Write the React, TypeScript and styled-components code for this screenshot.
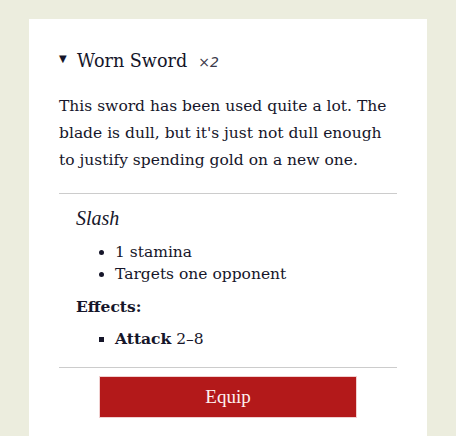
import React from "react";
import styled, { createGlobalStyle } from "styled-components";

const Global = createGlobalStyle`
  html, body {
    margin: 0;
    padding: 0;
    background: #ecedde;
  }
  body {
    font-family: "DejaVu Serif", "Liberation Serif", serif;
    color: #16162a;
  }
`;

const Page = styled.div`
  padding-top: 19px;
`;

const Card = styled.section`
  width: 398px;
  margin: 0 auto;
  background: #ffffff;
  box-sizing: border-box;
  padding: 30px 30px 19px;
`;

const Summary = styled.div`
  display: flex;
  align-items: baseline;
  height: 24px;
`;

const Marker = styled.span`
  align-self: center;
  width: 18px;
  margin-bottom: 5px;
  font-size: 10px;
  line-height: 1;
`;

const Title = styled.h2`
  margin: 0;
  font-size: 17.6px;
  font-weight: 400;
  line-height: 24px;
`;

const Count = styled.span`
  margin-left: 11px;
  font-family: "DejaVu Sans", sans-serif;
  font-style: italic;
  font-size: 14px;
  color: #3a3a4a;
`;

const Description = styled.p`
  margin: 20px 0 19px;
  font-size: 15.5px;
  line-height: 27px;
`;

const Divider = styled.hr`
  margin: 0;
  border: none;
  border-top: 1px solid #cccccc;
`;

const Ability = styled.div`
  padding: 11px 0 17px 17px;
`;

const AbilityName = styled.h3`
  margin: 0;
  font-family: "Liberation Serif", serif;
  font-style: italic;
  font-weight: 400;
  font-size: 20px;
  line-height: 26px;
`;

const List = styled.ul<{ $square?: boolean }>`
  margin: 10px 0 0;
  padding-left: 39px;
  list-style: ${(p) => (p.$square ? "square" : "disc")};
  font-size: 15.5px;
  line-height: 22px;
`;

const Label = styled.div`
  margin-top: 11px;
  font-size: 15.5px;
  font-weight: 700;
  line-height: 22px;
`;

const Strong = styled.b`
  font-weight: 700;
`;

const Footer = styled.div`
  display: flex;
  justify-content: center;
  padding-top: 8px;
`;

const Button = styled.button`
  width: 258px;
  height: 42px;
  box-sizing: border-box;
  background: #b3191a;
  border: 1px solid #f1d0d0;
  color: #fdf0f0;
  font-family: "Liberation Serif", serif;
  font-size: 19px;
  cursor: pointer;
`;

export default function App() {
  return (
    <>
      <Global />
      <Page>
        <Card>
          <Summary>
            <Marker>▼</Marker>
            <Title>Worn Sword</Title>
            <Count>×2</Count>
          </Summary>
          <Description>
            This sword has been used quite a lot. The blade is dull, but it's
            just not dull enough to justify spending gold on a new one.
          </Description>
          <Divider />
          <Ability>
            <AbilityName>Slash</AbilityName>
            <List>
              <li>1 stamina</li>
              <li>Targets one opponent</li>
            </List>
            <Label>Effects:</Label>
            <List $square>
              <li>
                <Strong>Attack</Strong> 2–8
              </li>
            </List>
          </Ability>
          <Divider />
          <Footer>
            <Button>Equip</Button>
          </Footer>
        </Card>
      </Page>
    </>
  );
}
